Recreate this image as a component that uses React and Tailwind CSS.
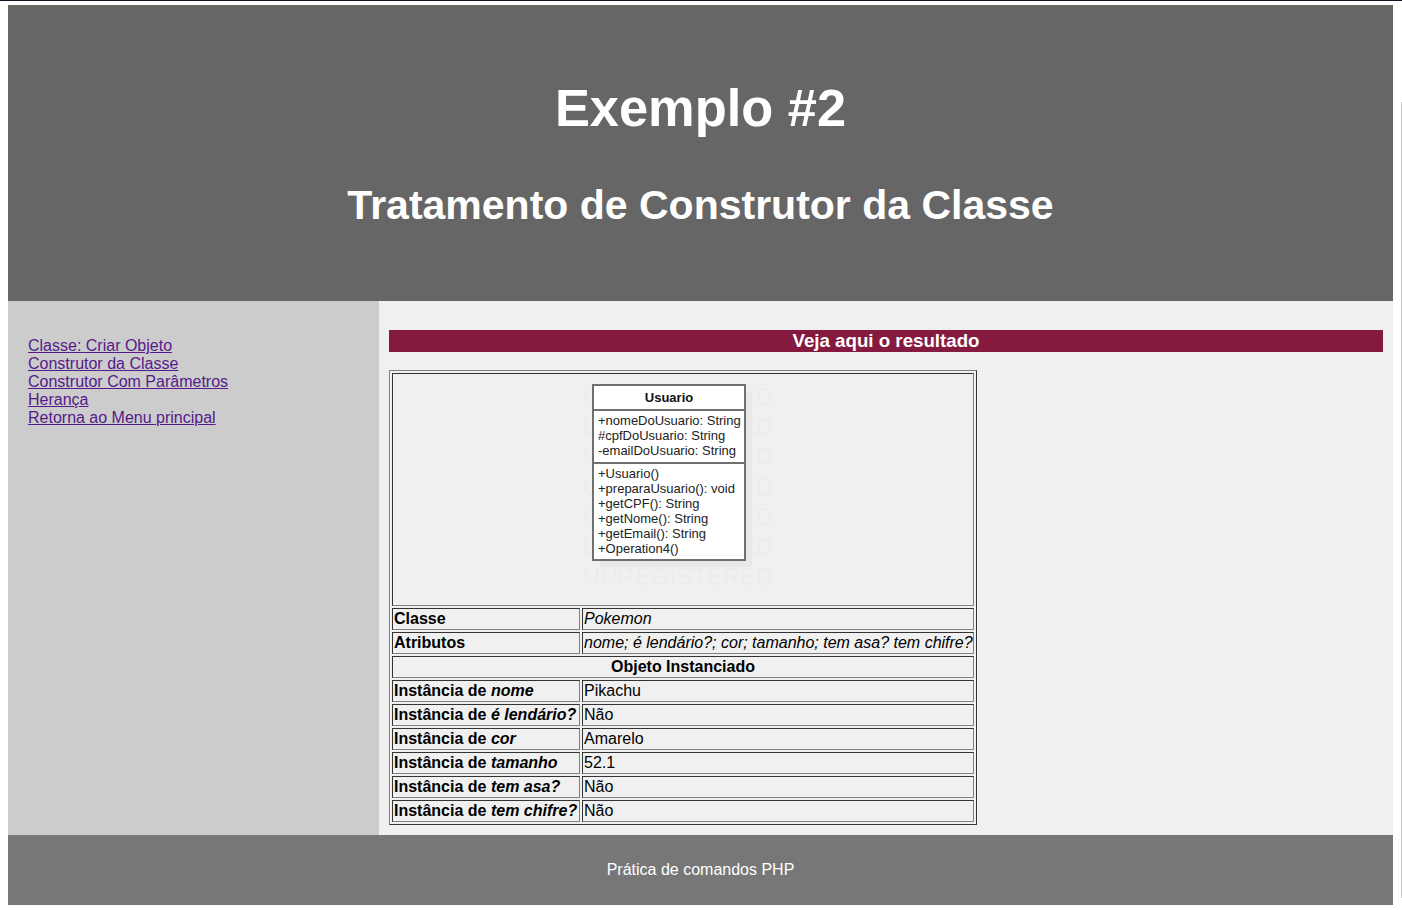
import React from 'react';

const links = [
  'Classe: Criar Objeto',
  'Construtor da Classe',
  'Construtor Com Parâmetros',
  'Herança',
  'Retorna ao Menu principal',
];

const attributes = [
  '+nomeDoUsuario: String',
  '#cpfDoUsuario: String',
  '-emailDoUsuario: String',
];

const operations = [
  '+Usuario()',
  '+preparaUsuario(): void',
  '+getCPF(): String',
  '+getNome(): String',
  '+getEmail(): String',
  '+Operation4()',
];

const instances = [
  ['nome', 'Pikachu'],
  ['é lendário?', 'Não'],
  ['cor', 'Amarelo'],
  ['tamanho', '52.1'],
  ['tem asa?', 'Não'],
  ['tem chifre?', 'Não'],
];

const cell = 'border border-t-[#333333] border-l-[#333333] border-r-[#808080] border-b-[#808080] p-px leading-[18px] whitespace-nowrap';

const UmlDiagram = () => (
  <svg width="200" height="229" viewBox="0 0 200 229" className="block mx-auto" fontFamily="'Liberation Sans', Arial, sans-serif">
    {[0, 30, 60, 90, 120, 150].map((y) => (
      <g key={y} fontSize="24" fill="#ececec">
        <text x="0" y={y + 30}>U</text>
        <text x="190" y={y + 30} textAnchor="end">ED</text>
      </g>
    ))}
    <text x="0" y="210" fontSize="24" fill="#ececec">UNREGISTERED</text>
    <rect x="17" y="17" width="152" height="175" fill="#e8e8e8" />
    <rect x="10" y="10" width="152" height="175" fill="#ffffff" stroke="#707070" strokeWidth="2" />
    <line x1="10" y1="35" x2="162" y2="35" stroke="#707070" strokeWidth="2" />
    <line x1="10" y1="88" x2="162" y2="88" stroke="#707070" strokeWidth="2" />
    <text x="86" y="27" fontSize="13" fontWeight="700" textAnchor="middle" fill="#111">Usuario</text>
    {attributes.map((line, i) => (
      <text key={line} x="15" y={50 + i * 15} fontSize="13" fill="#222">{line}</text>
    ))}
    {operations.map((line, i) => (
      <text key={line} x="15" y={103 + i * 15} fontSize="13" fill="#222">{line}</text>
    ))}
  </svg>
);

export default function App() {
  return (
    <div className="relative min-h-[910px] bg-white pl-2 pr-[9px] pt-[5px] text-base text-black font-['Liberation_Sans',Arial,sans-serif]">
      <div className="absolute inset-x-0 top-0 h-px bg-[#111122]" />
      <div className="absolute right-0 top-[102px] h-[796px] w-px bg-[#c8c8c8]" />
      <header className="flex h-[296px] flex-col items-center bg-[#666666] font-bold text-white">
        <h1 className="mt-[73px] text-[52.4px] leading-[60px]">Exemplo #2</h1>
        <h2 className="mt-[43px] text-[41px] leading-[48px]">Tratamento de Construtor da Classe</h2>
      </header>

      <div className="flex h-[534px]">
        {/* Menu */}
        <nav className="w-[371px] bg-[#cccccc] pl-5 pt-[36px] leading-[18px]">
          {links.map((link) => (
            <div key={link}>
              <a href="#" className="text-[#551a8b] underline">{link}</a>
            </div>
          ))}
        </nav>

        {/* Resultado */}
        <main className="flex-1 bg-[#f0f0f0] px-2.5 pt-[29px]">
          <div className="h-[22px] bg-[#851a40] text-center text-[18.72px] font-bold leading-[22px] text-white">
            Veja aqui o resultado
          </div>
          <table className="mt-[18px] w-[588px] table-fixed border-separate border-spacing-[2px] border border-t-[#808080] border-l-[#808080] border-r-[#333333] border-b-[#333333] text-left">
            <colgroup>
              <col className="w-[188px]" />
              <col />
            </colgroup>
            <tbody>
              <tr>
                <td colSpan={2} className="border border-t-[#333333] border-l-[#333333] border-r-[#808080] border-b-[#808080] p-px">
                  <UmlDiagram />
                </td>
              </tr>
              <tr>
                <th className={cell}>Classe</th>
                <td className={cell}><i>Pokemon</i></td>
              </tr>
              <tr>
                <th className={cell}>Atributos</th>
                <td className={cell}><i>nome; é lendário?; cor; tamanho; tem asa? tem chifre?</i></td>
              </tr>
              <tr>
                <th colSpan={2} className={`${cell} text-center`}>Objeto Instanciado</th>
              </tr>
              {instances.map(([name, value]) => (
                <tr key={name}>
                  <th className={cell}>Instância de <i>{name}</i></th>
                  <td className={cell}>{value}</td>
                </tr>
              ))}
            </tbody>
          </table>
        </main>
      </div>

      <footer className="flex h-[70px] items-center justify-center bg-[#777777] text-white">
        Prática de comandos PHP
      </footer>
    </div>
  );
}
